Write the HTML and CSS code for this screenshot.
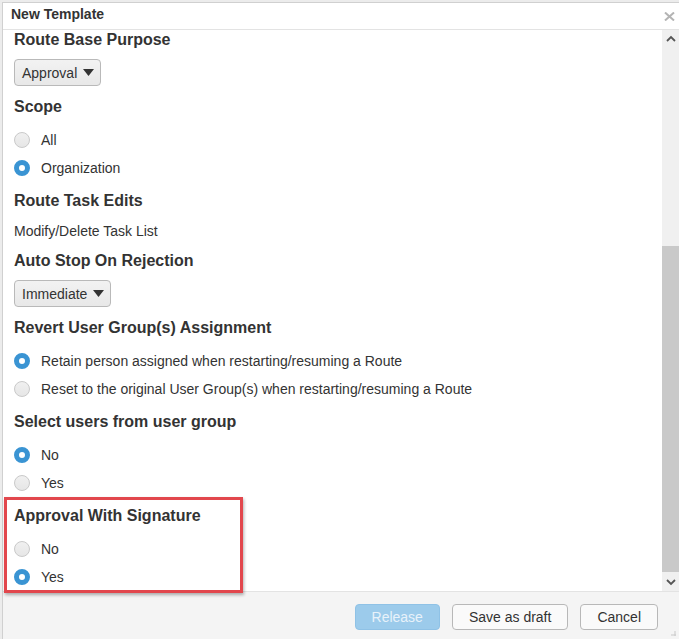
FILE: index.html
```html
<!DOCTYPE html>
<html>
<head>
<meta charset="utf-8">
<title>New Template</title>
<link rel="stylesheet" href="styles.css">
</head>
<body>
<div class="dialog">
  <div class="titlebar">
    <span class="title">New Template</span>
    <svg class="close" width="11" height="9" viewBox="0 0 11 9"><path d="M1 0.5 L10 8.5 M10 0.5 L1 8.5" stroke="#b4b4b4" stroke-width="2" fill="none"/></svg>
  </div>
  <div class="body">
    <div class="content">
      <section class="sec first">
        <h3>Route Base Purpose</h3>
        <div class="select">Approval <svg width="11" height="7" viewBox="0 0 11 7"><path d="M0 0 H11 L5.5 7 Z" fill="#333"/></svg></div>
      </section>
      <section class="sec radios">
        <h3>Scope</h3>
        <div class="radio"><span class="dot"></span>All</div>
        <div class="radio"><span class="dot on"></span>Organization</div>
      </section>
      <section class="sec">
        <h3>Route Task Edits</h3>
        <p class="text">Modify/Delete Task List</p>
      </section>
      <section class="sec wide">
        <h3>Auto Stop On Rejection</h3>
        <div class="select">Immediate <svg width="11" height="7" viewBox="0 0 11 7"><path d="M0 0 H11 L5.5 7 Z" fill="#333"/></svg></div>
      </section>
      <section class="sec radios">
        <h3>Revert User Group(s) Assignment</h3>
        <div class="radio"><span class="dot on"></span>Retain person assigned when restarting/resuming a Route</div>
        <div class="radio"><span class="dot"></span>Reset to the original User Group(s) when restarting/resuming a Route</div>
      </section>
      <section class="sec radios">
        <h3>Select users from user group</h3>
        <div class="radio"><span class="dot on"></span>No</div>
        <div class="radio"><span class="dot"></span>Yes</div>
      </section>
      <section class="sec radios highlight">
        <span class="redbox"></span>
        <h3>Approval With Signature</h3>
        <div class="radio"><span class="dot"></span>No</div>
        <div class="radio"><span class="dot on"></span>Yes</div>
      </section>
    </div>
    <div class="scrollbar">
      <div class="sb-btn"><svg width="10" height="7" viewBox="0 0 10 7"><path d="M1 6 L5 2 L9 6" stroke="#555" stroke-width="1.8" fill="none"/></svg></div>
      <div class="sb-track"><div class="sb-thumb"></div></div>
      <div class="sb-btn"><svg width="10" height="7" viewBox="0 0 10 7"><path d="M1 1 L5 5 L9 1" stroke="#555" stroke-width="1.8" fill="none"/></svg></div>
    </div>
  </div>
  <div class="footer">
    <button class="btn primary">Release</button>
    <button class="btn">Save as draft</button>
    <button class="btn">Cancel</button>
    <svg class="grip" width="5" height="5" viewBox="0 0 5 5"><path d="M4 0 V5 M0 4 H5" stroke="#c8c8c8" stroke-width="1"/></svg>
  </div>
</div>
</body>
</html>
```

FILE: styles.css
```css
* { box-sizing: border-box; }
html, body { margin: 0; padding: 0; }
body {
  background: #ececec;
  font-family: "Liberation Sans", Arial, sans-serif;
  color: #333;
  width: 679px;
  height: 639px;
  overflow: hidden;
}
.dialog {
  margin: 2px 0 0 2px;
  height: 637px;
  background: #fff;
  border-left: 1px solid #d0d0d0;
  border-top: 1px solid #d0d0d0;
  display: flex;
  flex-direction: column;
  position: relative;
}
.titlebar {
  height: 27px;
  border-bottom: 1px solid #e3e3e3;
  padding: 0 0 0 8px;
  display: flex;
  align-items: flex-start;
  justify-content: space-between;
}
.title {
  font-weight: bold;
  font-size: 14px;
  line-height: 23px;
  color: #333;
}
.close { margin: 9px 4px 0 0; }
.body {
  height: 561px;
  display: flex;
}
.content {
  flex: 1;
  padding: 0 0 0 11px;
}
.sec { margin-bottom: 10px; position: relative; }
.sec.first { margin-bottom: 11px; }
.sec.radios { margin-bottom: 9px; }
.sec.wide { margin-bottom: 11px; }
.sec h3 {
  margin: 0 0 9px;
  font-size: 16px;
  line-height: 20px;
  font-weight: bold;
  color: #333;
}
.text { margin: 0; padding-top: 1px; font-size: 14px; line-height: 20px; }
.select {
  display: inline-flex;
  align-items: center;
  gap: 6px;
  height: 27px;
  padding: 0 6px 0 7px;
  border: 1px solid #b9b9b9;
  border-radius: 4px;
  background: linear-gradient(#f2f2f2, #e8e8e8);
  font-size: 14px;
  color: #333;
}
.radio {
  display: flex;
  align-items: center;
  gap: 11px;
  height: 28px;
  font-size: 14px;
  color: #333;
}
.dot {
  width: 16px;
  height: 16px;
  border-radius: 50%;
  border: 1px solid #c9c9c9;
  background: linear-gradient(#f0f0f0, #e6e6e6);
  flex: none;
}
.dot.on {
  border: 5px solid #3a94d3;
  background: #fff;
}
.highlight { padding-top: 0; margin-bottom: 0; }
.redbox {
  position: absolute;
  z-index: 3;
  left: -10px;
  top: -9px;
  width: 239px;
  bottom: -2px;
  border: 3px solid #e2474d;
  box-shadow: 1px 2px 3px rgba(0,0,0,0.3);
  pointer-events: none;
}
.scrollbar {
  width: 17px;
  background: #f0f0f0;
  display: flex;
  flex-direction: column;
}
.sb-btn {
  height: 17px;
  display: flex;
  align-items: center;
  justify-content: center;
  padding-left: 1px;
}
.sb-track {
  flex: 1;
  display: flex;
  flex-direction: column;
  justify-content: flex-end;
}
.sb-thumb {
  height: 326px;
  margin-bottom: 2px;
  background: #c9c9c9;
}
.footer {
  flex: 1;
  border-top: 1px solid #e3e3e3;
  background: #f4f4f4;
  display: flex;
  justify-content: flex-end;
  align-items: flex-start;
  gap: 12px;
  padding: 12px 21px 0 0;
  position: relative;
}
.btn {
  height: 26px;
  padding: 0 16px;
  border: 1px solid #b8b8b8;
  border-radius: 4px;
  background: #fafafa;
  font-family: "Liberation Sans", Arial, sans-serif;
  font-size: 14px;
  color: #333;
}
.btn.primary {
  background: #9ccbeb;
  border-color: #8fc2e6;
  color: #e8f2fa;
}
.grip { position: absolute; right: 3px; bottom: 3px; }
```
